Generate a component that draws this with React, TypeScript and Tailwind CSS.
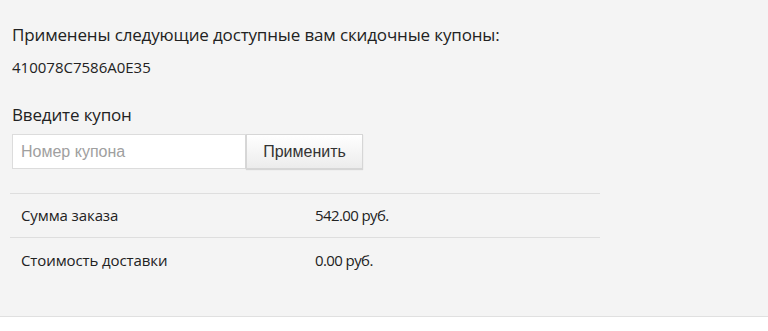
export default function App() {
  const rows = [
    { label: "Сумма заказа", value: "542.00 руб." },
    { label: "Стоимость доставки", value: "0.00 руб." },
  ];

  return (
    <div className="min-h-[331px] bg-white font-['Open_Sans',sans-serif] text-[#222]">
      <div className="bg-[#f4f4f4] border-b border-[#e0e0e0] h-[317px] pl-3 pt-[23px]">
        <p className="text-[17px] leading-[24px] tracking-[-0.15px]">
          Применены следующие доступные вам скидочные купоны:
        </p>
        <p className="mt-[10px] text-[15px] leading-[20px] tracking-[0px]">410078C7586A0E35</p>

        <p className="mt-[26px] text-[17px] leading-[24px] tracking-[-0.15px]">Введите купон</p>
        <div className="mt-[7px] flex">
          <input
            placeholder="Номер купона"
            className="w-[234px] h-[35px] border border-[#dcdcdc] bg-white px-[8px] text-[16px] font-['Liberation_Sans',sans-serif] placeholder:text-[#a0a0a0] outline-none"
          />
          <button className="h-[35px] w-[117px] border border-[#d6d6d6] bg-gradient-to-b from-white to-[#ececec] text-[16px] text-[#333] font-['Liberation_Sans',sans-serif] shadow-[0_1px_1px_rgba(0,0,0,0.12)]">
            Применить
          </button>
        </div>

        <div className="mt-[24px] w-[590px] -ml-[2px] border-t border-[#dedede]">
          {rows.map((r) => (
            <div
              key={r.label}
              className="flex h-[44px] items-center border-b border-[#dedede] last:border-b-0 text-[15px]"
            >
              <span className="w-[305px] pl-[11px] tracking-[-0.1px]">{r.label}</span>
              <span className="tracking-[-0.6px]">{r.value}</span>
            </div>
          ))}
        </div>
      </div>
    </div>
  );
}
